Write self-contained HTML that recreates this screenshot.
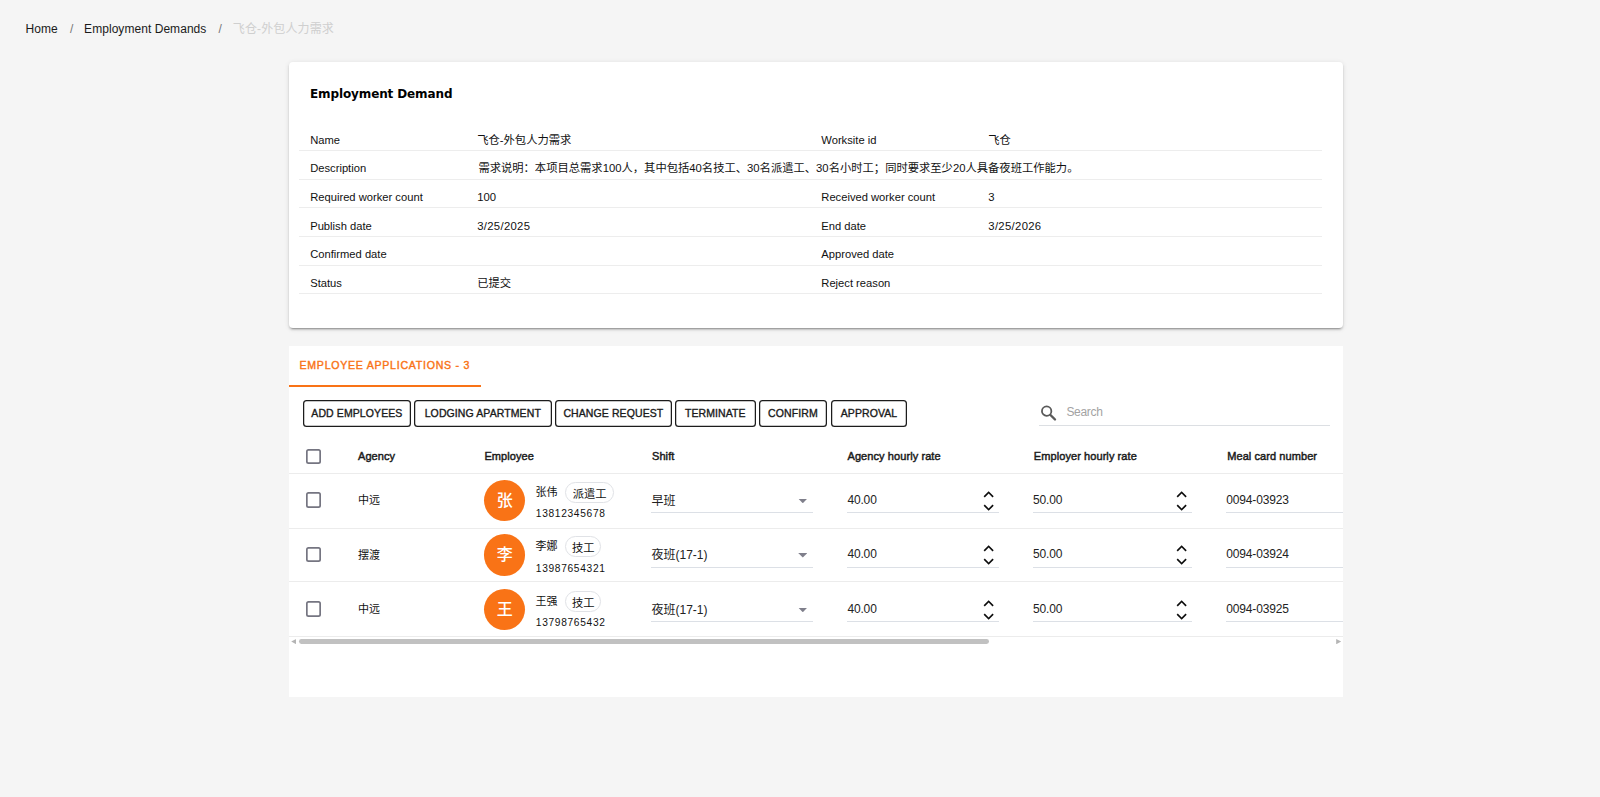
<!DOCTYPE html>
<html lang="zh">
<head>
<meta charset="utf-8">
<title>Employment Demand</title>
<style>
*{box-sizing:border-box;margin:0;padding:0}
html,body{width:1600px;height:797px;overflow:hidden}
body{background:#f5f5f5;color:#111;font-family:"Liberation Sans","Noto Sans CJK SC",sans-serif;font-size:11px;position:relative}
.crumbs{position:absolute;left:25.5px;top:21px;height:16px;line-height:16px;font-size:12px;white-space:nowrap;color:#1a1a1a;display:flex;letter-spacing:.05px}
.crumbs .sep{color:#757575;width:26.4px;padding-left:12.2px;display:inline-block}
.crumbs .cur{color:#cfcfcf;letter-spacing:.12px}
.card{position:absolute;left:289px;width:1054px;background:#fff}
.info{top:62px;height:265.5px;border-radius:4px;box-shadow:0 3px 1px -2px rgba(0,0,0,.2),0 2px 2px 0 rgba(0,0,0,.14),0 1px 5px 0 rgba(0,0,0,.12)}
.info h2{position:absolute;left:21px;top:21.6px;font-family:"DejaVu Sans","Liberation Sans",sans-serif;font-size:12px;line-height:20px;font-weight:700;color:#000;letter-spacing:-.12px;white-space:nowrap}
.rows{position:absolute;left:10.3px;top:60.34px;width:1023.2px}
.row{height:28.66px;border-bottom:1px solid #ededed;position:relative;line-height:16px;white-space:nowrap;font-size:11.2px}
.row span{position:absolute;top:9.5px}
.row .v1,.row .v2{font-size:11.3px}
.row .d{letter-spacing:.32px}
.row .l1{left:10.9px}.row .v1{left:177.9px}.row .l2{left:522px}.row .v2{left:689px}
.apps{top:345.5px;height:351.5px}

.tab:after{content:"";position:absolute;left:0;bottom:0;width:100%;height:1.65px;background:#f97316}
.tab{position:absolute;left:0;top:0;width:192px;height:41.3px;color:#f97316;font-size:10.6px;font-weight:400;-webkit-text-stroke:.4px #f97316;letter-spacing:.73px;line-height:16px;padding:11.5px 0 0 10.5px;white-space:nowrap}
.toolbar{position:absolute;left:0;top:54.5px;width:700px;height:27px}
.btn{position:absolute;top:0;height:26.6px;border:0;box-shadow:inset 0 0 0 1.25px #1c1c1c;border-radius:3.5px;background:#fff;color:#1a1a1a;font-family:inherit;font-size:10.5px;font-weight:400;-webkit-text-stroke:.35px #1a1a1a;letter-spacing:.1px;line-height:26.2px;padding:0;text-align:center;white-space:nowrap;text-transform:uppercase}
.search{position:absolute;left:750px;top:56px;width:291px;height:24.5px;border-bottom:1px solid #dcdfe3}
.search svg{position:absolute;left:0;top:0;width:20px;height:20px}
.search span{position:absolute;left:27.4px;top:2.8px;line-height:16px;font-size:12px;letter-spacing:-.3px;color:#a3a3a3}
.thead{position:absolute;left:0;top:100px;width:1054px;height:28.4px;border-bottom:1px solid #ececec;font-weight:400;-webkit-text-stroke:.45px #1a1a1a;font-size:11px;letter-spacing:.08px;color:#1a1a1a}
.thead span{position:absolute;top:2.5px;line-height:16px;white-space:nowrap}
.cb{position:absolute;left:16.7px;width:15.4px;height:15.3px;box-shadow:inset 0 0 0 1.7px #757581;border-radius:2.5px;background:#fff}
.c1{left:69px}.c2{left:195.4px}.c3{left:363px}.c4{left:558.5px}.c5{left:744.8px}.c6{left:938.2px}
.tr{position:absolute;left:0;width:1054px;height:54.3px;overflow:hidden}
.ln{position:absolute;left:0;width:1054px;height:1px;background:#ececec}
.tr>*{position:absolute}
.tr .cb{top:18.9px}
.agency{left:69px;top:18.5px;line-height:16px;font-size:11px}
.av{left:195px;top:6.3px;width:41.4px;height:41.4px;border-radius:50%;background:#f97316;color:#fff;font-size:16px;font-weight:500;line-height:41px;text-align:center}
.nm{left:246.5px;top:10.2px;line-height:16px;font-size:11px}
.chip{left:276.2px;top:8.4px;height:20.7px;border:1px solid #e0e2e6;border-radius:10.4px;padding:4px 0 0;width:49px;text-align:center;line-height:14px;font-size:11.3px;white-space:nowrap}
.chip.s{width:36.2px}
.r2 .sel,.r2 .num{height:25.5px}
.ph{left:246.8px;top:33.5px;line-height:14px;font-size:10.2px;letter-spacing:.68px}
.sel{left:361.9px;padding-left:.6px;top:14.4px;width:162.1px;height:25px;border-bottom:1px solid #dce0e6;font-size:12px;line-height:16px;padding-top:5.1px;color:#222}
.sel i{position:absolute;right:5.6px;top:10.6px;width:9.2px;height:4.6px;background:#7f7f8b;clip-path:polygon(0 0,100% 0,50% 100%)}
.num{top:14.4px;height:25px;border-bottom:1px solid #dce0e6;font-size:12px;line-height:16px;padding-top:4.1px;letter-spacing:-.15px;color:#222}
.n1{left:558.4px;width:151.4px}.n2{left:744px;width:159px}.n3{left:937.2px;width:140px}
.num svg{position:absolute;right:4.2px;top:1.6px;width:12px;height:22px}
.sbar{position:absolute;left:0;top:291.5px;width:1054px;height:10px}
.sbar b{position:absolute;left:10.4px;top:2.1px;width:690px;height:4.8px;border-radius:2.4px;background:#c1c1c1}
.sbar i{position:absolute;top:2px;width:5px;height:5.2px;background:#b4b4b4}
.sbar .la{left:2.2px;clip-path:polygon(100% 0,0 50%,100% 100%)}
.sbar .ra{right:1.8px;clip-path:polygon(0 0,100% 50%,0 100%)}
</style>
</head>
<body>
<nav class="crumbs"><span>Home</span><span class="sep">/</span><span>Employment Demands</span><span class="sep">/</span><span class="cur">飞仓-外包人力需求</span></nav>

<section class="card info">
  <h2>Employment Demand</h2>
  <div class="rows">
    <div class="row"><span class="l1">Name</span><span class="v1">飞仓-外包人力需求</span><span class="l2">Worksite id</span><span class="v2">飞仓</span></div>
    <div class="row"><span class="l1">Description</span><span class="v1" style="padding-left:1.2px">需求说明：本项目总需求100人，其中包括40名技工、30名派遣工、30名小时工；同时要求至少20人具备夜班工作能力。</span></div>
    <div class="row"><span class="l1">Required worker count</span><span class="v1">100</span><span class="l2">Received worker count</span><span class="v2">3</span></div>
    <div class="row"><span class="l1">Publish date</span><span class="v1 d">3/25/2025</span><span class="l2">End date</span><span class="v2 d">3/25/2026</span></div>
    <div class="row"><span class="l1">Confirmed date</span><span class="v1"></span><span class="l2">Approved date</span><span class="v2"></span></div>
    <div class="row"><span class="l1">Status</span><span class="v1">已提交</span><span class="l2">Reject reason</span><span class="v2"></span></div>
  </div>
</section>

<section class="card apps">
  <div class="tab">EMPLOYEE APPLICATIONS - 3</div>
  <div class="toolbar"><button class="btn" style="left:14.1px;width:107.6px">ADD EMPLOYEES</button><button class="btn" style="left:125px;width:137.6px">LODGING APARTMENT</button><button class="btn" style="left:266.2px;width:116.4px">CHANGE REQUEST</button><button class="btn" style="left:386px;width:80.7px">TERMINATE</button><button class="btn" style="left:469.8px;width:68.2px">CONFIRM</button><button class="btn" style="left:542px;width:76px">APPROVAL</button></div>
  <div class="search"><svg viewBox="0 0 20 20"><circle cx="7.65" cy="9.15" r="4.7" fill="none" stroke="#5a5a5a" stroke-width="1.8"/><path d="M11.5 13 L16 17.5" stroke="#5a5a5a" stroke-width="2.4" stroke-linecap="round"/></svg><span>Search</span></div>
  <div class="thead"><div class="cb" style="top:3.4px"></div><span class="c1">Agency</span><span class="c2">Employee</span><span class="c3">Shift</span><span class="c4">Agency hourly rate</span><span class="c5">Employer hourly rate</span><span class="c6">Meal card number</span></div>
  <div class="tr" style="top:128.1px"><div class="cb"></div><div class="agency">中远</div><div class="av">张</div><div class="nm">张伟</div><div class="chip">派遣工</div><div class="ph">13812345678</div><div class="sel">早班<i></i></div><div class="num n1">40.00<svg viewBox="0 0 12 22"><g fill="#0d0d0d"><path transform="translate(.6 1.2) scale(.842) translate(-6 -8)" d="M7.41 15.41L12 10.83L16.59 15.41L18 14L12 8L6 14Z"/><path transform="translate(.6 14.55) scale(.842) translate(-6 -8.58)" d="M7.41 8.58L12 13.17L16.59 8.58L18 10L12 16L6 10Z"/></g></svg></div><div class="num n2">50.00<svg viewBox="0 0 12 22"><g fill="#0d0d0d"><path transform="translate(.6 1.2) scale(.842) translate(-6 -8)" d="M7.41 15.41L12 10.83L16.59 15.41L18 14L12 8L6 14Z"/><path transform="translate(.6 14.55) scale(.842) translate(-6 -8.58)" d="M7.41 8.58L12 13.17L16.59 8.58L18 10L12 16L6 10Z"/></g></svg></div><div class="num n3">0094-03923</div></div>
  <div class="tr r2" style="top:182.5px"><div class="cb"></div><div class="agency">摆渡</div><div class="av">李</div><div class="nm">李娜</div><div class="chip s">技工</div><div class="ph">13987654321</div><div class="sel">夜班(17-1)<i></i></div><div class="num n1">40.00<svg viewBox="0 0 12 22"><g fill="#0d0d0d"><path transform="translate(.6 1.2) scale(.842) translate(-6 -8)" d="M7.41 15.41L12 10.83L16.59 15.41L18 14L12 8L6 14Z"/><path transform="translate(.6 14.55) scale(.842) translate(-6 -8.58)" d="M7.41 8.58L12 13.17L16.59 8.58L18 10L12 16L6 10Z"/></g></svg></div><div class="num n2">50.00<svg viewBox="0 0 12 22"><g fill="#0d0d0d"><path transform="translate(.6 1.2) scale(.842) translate(-6 -8)" d="M7.41 15.41L12 10.83L16.59 15.41L18 14L12 8L6 14Z"/><path transform="translate(.6 14.55) scale(.842) translate(-6 -8.58)" d="M7.41 8.58L12 13.17L16.59 8.58L18 10L12 16L6 10Z"/></g></svg></div><div class="num n3">0094-03924</div></div>
  <div class="tr" style="top:237.1px"><div class="cb"></div><div class="agency">中远</div><div class="av">王</div><div class="nm">王强</div><div class="chip s">技工</div><div class="ph">13798765432</div><div class="sel">夜班(17-1)<i></i></div><div class="num n1">40.00<svg viewBox="0 0 12 22"><g fill="#0d0d0d"><path transform="translate(.6 1.2) scale(.842) translate(-6 -8)" d="M7.41 15.41L12 10.83L16.59 15.41L18 14L12 8L6 14Z"/><path transform="translate(.6 14.55) scale(.842) translate(-6 -8.58)" d="M7.41 8.58L12 13.17L16.59 8.58L18 10L12 16L6 10Z"/></g></svg></div><div class="num n2">50.00<svg viewBox="0 0 12 22"><g fill="#0d0d0d"><path transform="translate(.6 1.2) scale(.842) translate(-6 -8)" d="M7.41 15.41L12 10.83L16.59 15.41L18 14L12 8L6 14Z"/><path transform="translate(.6 14.55) scale(.842) translate(-6 -8.58)" d="M7.41 8.58L12 13.17L16.59 8.58L18 10L12 16L6 10Z"/></g></svg></div><div class="num n3">0094-03925</div></div>
  <div class="ln" style="top:182.4px"></div><div class="ln" style="top:235.2px"></div><div class="ln" style="top:290.3px"></div>
  <div class="sbar"><i class="la"></i><b></b><i class="ra"></i></div>
</section>
</body>
</html>
